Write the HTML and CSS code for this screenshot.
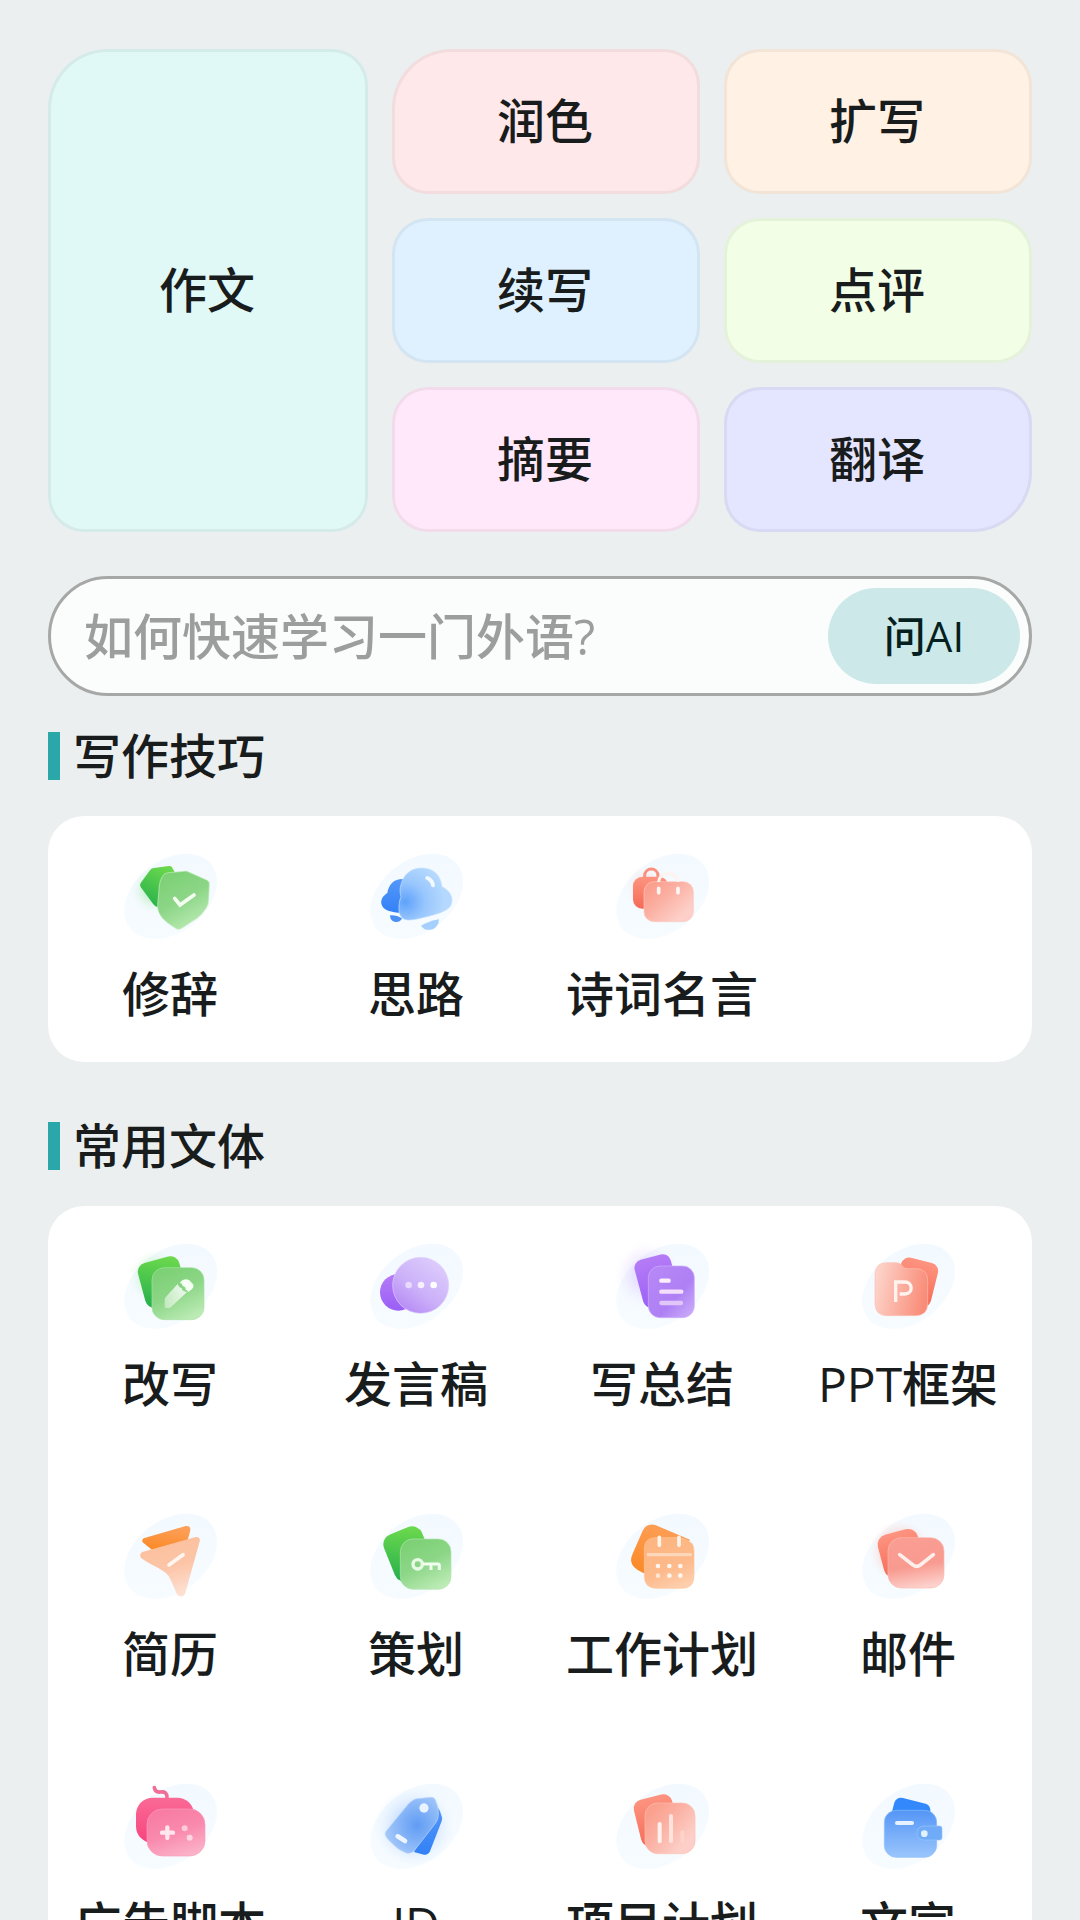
FILE: index.html
```html
<!DOCTYPE html>
<html lang="zh-CN">
<head>
<meta charset="utf-8">
<meta name="viewport" content="width=device-width, initial-scale=1">
<title>AI 写作</title>
<link rel="stylesheet" href="styles.css">
</head>
<body>
<svg class="defs" aria-hidden="true">
  <defs>
    <linearGradient id="blob" x1="0" y1="1" x2="1" y2="0"><stop offset="0" stop-color="#f7fcff"/><stop offset="1" stop-color="#f2f9ff"/></linearGradient>
    <linearGradient id="green" x1="0.7" y1="0" x2="0.3" y2="1"><stop offset="0" stop-color="#6bd84d"/><stop offset="1" stop-color="#28b14c"/></linearGradient>
    <linearGradient id="green-glass" x1="0.2" y1="0" x2="0.7" y2="1"><stop offset="0" stop-color="#7bd073"/><stop offset="0.5" stop-color="#8cd687"/><stop offset="1" stop-color="#bcebb5"/></linearGradient>
    <linearGradient id="purple" x1="0.5" y1="0" x2="0.5" y2="1"><stop offset="0" stop-color="#b57cf6"/><stop offset="1" stop-color="#9a5ff6"/></linearGradient>
    <linearGradient id="purple-glass" x1="0.2" y1="0.9" x2="0.8" y2="0.1"><stop offset="0" stop-color="#b88ef5"/><stop offset="0.4" stop-color="#cbb0f9"/><stop offset="1" stop-color="#dccbfc"/></linearGradient>
    <linearGradient id="purple-page" x1="0" y1="0" x2="1" y2="1"><stop offset="0" stop-color="#b888f7"/><stop offset="0.6" stop-color="#ae80f4"/><stop offset="1" stop-color="#ceb2fa"/></linearGradient>
    <linearGradient id="red" x1="0.5" y1="0" x2="0.5" y2="1"><stop offset="0" stop-color="#fd9480"/><stop offset="1" stop-color="#f56a55"/></linearGradient>
    <linearGradient id="red-glass" x1="0.1" y1="0.2" x2="0.8" y2="0.8"><stop offset="0" stop-color="#fba08f"/><stop offset="0.4" stop-color="#fbb0a2"/><stop offset="1" stop-color="#fdcfc8"/></linearGradient>
    <linearGradient id="red-left" x1="0" y1="0.3" x2="1" y2="0.5"><stop offset="0" stop-color="#fdd5cc"/><stop offset="0.5" stop-color="#fbb0a1"/><stop offset="1" stop-color="#f98b77"/></linearGradient>
    <linearGradient id="red-down" x1="0.4" y1="0" x2="0.6" y2="1"><stop offset="0" stop-color="#fa9d92"/><stop offset="0.55" stop-color="#f89a90"/><stop offset="1" stop-color="#fdd3ce"/></linearGradient>
    <linearGradient id="orange" x1="0.7" y1="0" x2="0.3" y2="1"><stop offset="0" stop-color="#fda05a"/><stop offset="1" stop-color="#fb8a28"/></linearGradient>
    <linearGradient id="orange-glass" x1="0.3" y1="0" x2="0.7" y2="1"><stop offset="0" stop-color="#fdb580"/><stop offset="0.6" stop-color="#fdba8b"/><stop offset="1" stop-color="#fecfae"/></linearGradient>
    <linearGradient id="peach-glass" x1="0.4" y1="0" x2="0.7" y2="1"><stop offset="0" stop-color="#fcc09c"/><stop offset="0.5" stop-color="#fcc5a8"/><stop offset="1" stop-color="#fee3d7"/></linearGradient>
    <linearGradient id="blue" x1="0.5" y1="0" x2="0.5" y2="1"><stop offset="0" stop-color="#5497f8"/><stop offset="1" stop-color="#3381f7"/></linearGradient>
    <radialGradient id="cloud" cx="0.12" cy="0.65" r="0.75"><stop offset="0" stop-color="#5fa2fb"/><stop offset="0.5" stop-color="#98c6fd"/><stop offset="1" stop-color="#b5d9fe"/></radialGradient>
    <radialGradient id="tag" cx="0.6" cy="0.5" r="0.65"><stop offset="0" stop-color="#609cf4"/><stop offset="1" stop-color="#a9cbfa"/></radialGradient>
    <linearGradient id="wallet" x1="0.5" y1="0" x2="0.5" y2="1"><stop offset="0" stop-color="#5496f6"/><stop offset="1" stop-color="#9bc5fc"/></linearGradient>
    <linearGradient id="pink" x1="0.5" y1="0" x2="0.5" y2="1"><stop offset="0" stop-color="#fa6a96"/><stop offset="1" stop-color="#f7447e"/></linearGradient>
    <linearGradient id="pink-glass" x1="0.3" y1="0" x2="0.7" y2="1"><stop offset="0" stop-color="#f87ba3"/><stop offset="0.5" stop-color="#f98aae"/><stop offset="1" stop-color="#fbb3ca"/></linearGradient>
    <linearGradient id="shine" x1="0" y1="1" x2="1" y2="0"><stop offset="0" stop-color="#fff" stop-opacity="0.4"/><stop offset="1" stop-color="#fff" stop-opacity="0.9"/></linearGradient>
    <radialGradient id="glow-blue"><stop offset="0.4" stop-color="#a9ccff" stop-opacity="0.6"/><stop offset="1" stop-color="#dcebff" stop-opacity="0"/></radialGradient>
    <radialGradient id="glow-red"><stop offset="0.5" stop-color="#ff9b8e" stop-opacity="0.4"/><stop offset="1" stop-color="#ffd8d2" stop-opacity="0"/></radialGradient>
    <radialGradient id="glow-purple"><stop offset="0.4" stop-color="#c9a8ff" stop-opacity="0.3"/><stop offset="1" stop-color="#eadcff" stop-opacity="0"/></radialGradient>
    <radialGradient id="glow-green"><stop offset="0.4" stop-color="#9be6a0" stop-opacity="0.45"/><stop offset="1" stop-color="#dcf7df" stop-opacity="0"/></radialGradient>
    <symbol id="base" viewBox="0 0 288 288"><ellipse cx="146" cy="142" rx="155" ry="108" transform="rotate(-38 146 142)" fill="url(#blob)"/></symbol>
  </defs>
</svg>

<main class="page">
  <nav class="tools" aria-label="写作工具">
    <button class="tool tool-essay">作文</button>
    <button class="tool tool-polish">润色</button>
    <button class="tool tool-expand">扩写</button>
    <button class="tool tool-continue">续写</button>
    <button class="tool tool-review">点评</button>
    <button class="tool tool-digest">摘要</button>
    <button class="tool tool-translate">翻译</button>
  </nav>

  <form class="ask">
    <input class="ask-input" type="text" aria-label="向AI提问" placeholder="如何快速学习一门外语?">
    <button class="ask-button" type="button">问AI</button>
  </form>

  <section class="group">
    <h2 class="group-title">写作技巧</h2>
    <div class="card">
      <a class="item" href="#rhetoric">
        <svg class="icon" viewBox="69 57 288 288" aria-hidden="true">
          <use href="#base" x="69" y="57" width="288" height="288"/>
          <circle cx="165" cy="180" r="70" fill="url(#glow-green)"/>
          <path d="M154 119q4-4 11-5l44-6q7-1 10 4l8 14v100l-50 6q-8-2-14-9l-38-52q-4-6 0-12z" fill="url(#green)"/>
          <path d="M195 133q6-4 14-5l45-4q8-2 15 2l54 24q9 4 8 14l-2 46q0 14-8 25-9 14-21 25-9 8-20 14l-32 21q-8 5-16 1l-26-17q-21-16-27-33-4-10-3-22l4-46q1-30 15-45z" fill="url(#green-glass)" stroke="#c5efc0" stroke-width="2"/>
          <path d="M227 205l16 20 42-30" fill="none" stroke="#f4fff2" stroke-width="11" stroke-linecap="round"/>
        </svg>
        <span class="item-label">修辞</span>
      </a>
      <a class="item" href="#ideas">
        <svg class="icon" viewBox="807 57 288 288" aria-hidden="true">
          <use href="#base" x="807" y="57" width="288" height="288"/>
          <path d="M915 147c-28-2-46 14-50 42-12 8-20 18-18 32 4 20 30 26 62 28z" fill="url(#blue)"/>
          <path d="M873 256q18-3 36 9-6 13-20 11-16-3-16-20z" fill="#4b90f7"/>
          <path d="M966 287q24-14 54-19-1 22-19 30-24 6-35-11z" fill="#a5cffc"/>
          <path d="M907 160c8-30 34-48 64-46 34 2 54 22 58 56 22 12 34 28 29 50-6 22-36 30-66 38-26 6-50 14-68 12-20-3-26-20-24-42 1-12 2-18 6-28-4-12-4-26 1-40z" fill="url(#cloud)" stroke="#c6e1ff" stroke-width="2"/>
          <path d="M985 144q15 7 17 22" fill="none" stroke="#f3f9ff" stroke-width="12" stroke-linecap="round"/>
        </svg>
        <span class="item-label">思路</span>
      </a>
      <a class="item" href="#quotes">
        <svg class="icon" viewBox="225 57 288 288" aria-hidden="true">
          <use href="#base" x="225" y="57" width="288" height="288"/>
          <circle cx="320" cy="170" r="62" fill="url(#glow-red)" opacity="0.35"/>
          <path d="M317 146v-8c0-28 40-28 40 0v8" fill="none" stroke="#fa8f7d" stroke-width="9"/>
          <rect x="282" y="140" width="106" height="96" rx="28" fill="url(#red)"/>
          <rect x="315" y="155" width="148" height="120" rx="30" fill="url(#red-glass)" stroke="#fdc8bf" stroke-width="2"/>
          <path d="M359 156c2-34 56-34 58 0" fill="none" stroke="#fff3f0" stroke-width="9"/>
          <path d="M359 175v13M417 175v13" stroke="#fff6f4" stroke-width="11" stroke-linecap="round"/>
        </svg>
        <span class="item-label">诗词名言</span>
      </a>
    </div>
  </section>

  <section class="group">
    <h2 class="group-title">常用文体</h2>
    <div class="card">
      <a class="item" href="#rewrite">
        <svg class="icon" viewBox="69 57 288 288" aria-hidden="true">
          <use href="#base" x="69" y="57" width="288" height="288"/>
          <circle cx="170" cy="170" r="82" fill="url(#glow-green)"/>
          <rect x="126" y="117" width="128" height="138" rx="27" transform="rotate(-15 190 186)" fill="url(#green)"/>
          <rect x="159" y="143" width="156" height="156" rx="37" fill="url(#green-glass)" stroke="#a9e3a3" stroke-width="2"/>
          <path d="M236 192q4 12 12 12 0 10 16 12l-47 44q-4 4-9 4h-7q-4 0-4-5v-20q0-5 4-9z" fill="url(#shine)"/>
          <path d="M247 183q12-10 24-2l10 10q6 8-2 16l-11 9q-4-7-8-7 1-9-9-11 0-7-8-10z" fill="#f6fff4"/>
        </svg>
        <span class="item-label">改写</span>
      </a>
      <a class="item" href="#speech">
        <svg class="icon" viewBox="807 57 288 288" aria-hidden="true">
          <use href="#base" x="807" y="57" width="288" height="288"/>
          <circle cx="898" cy="217" r="55" fill="url(#purple)"/>
          <circle cx="965" cy="196" r="84" fill="url(#purple-glass)" stroke="#e0d0fd" stroke-width="2"/>
          <circle cx="929" cy="195" r="10" fill="#e8dafd"/>
          <circle cx="966" cy="195" r="10" fill="#f5effe"/>
          <circle cx="1004" cy="195" r="10" fill="#fff"/>
        </svg>
        <span class="item-label">发言稿</span>
      </a>
      <a class="item" href="#summary">
        <svg class="icon" viewBox="225 57 288 288" aria-hidden="true">
          <use href="#base" x="225" y="57" width="288" height="288"/>
          <circle cx="325" cy="165" r="100" fill="url(#glow-purple)"/>
          <rect x="298" y="109" width="112" height="148" rx="25" transform="rotate(-15 354 183)" fill="url(#purple)"/>
          <rect x="328" y="138" width="138" height="155" rx="35" fill="url(#purple-page)" stroke="#cdb0fa" stroke-width="2"/>
          <path d="M367 182h22" stroke="#fdeffb" stroke-width="13" stroke-linecap="round"/>
          <path d="M367 215h60" stroke="#f3defb" stroke-width="13" stroke-linecap="round"/>
          <path d="M367 249h59" stroke="#e1c6fa" stroke-width="13" stroke-linecap="round"/>
        </svg>
        <span class="item-label">写总结</span>
      </a>
      <a class="item" href="#ppt">
        <svg class="icon" viewBox="963 57 288 288" aria-hidden="true">
          <use href="#base" x="963" y="57" width="288" height="288"/>
          <rect x="1074" y="119" width="114" height="136" rx="25" transform="rotate(14 1131 187)" fill="url(#red)"/>
          <path d="M1044 128h28q12 0 18 10 5 8 18 8h22q36 0 36 36v68q0 37-37 37h-84q-37 0-37-37v-86q0-36 36-36z" fill="url(#red-left)" stroke="#fdc0b4" stroke-width="2"/>
          <path d="M1070 246v-60h27c26 0 26 36 0 36h-15" fill="none" stroke="#fff3f0" stroke-width="10"/>
        </svg>
        <span class="item-label">PPT框架</span>
      </a>
      <a class="item" href="#resume">
        <svg class="icon" viewBox="69 57 288 288" aria-hidden="true">
          <use href="#base" x="69" y="57" width="288" height="288"/>
          <path d="M134 145l126-37q13-2 14 9 0 4-1 8l-12 42-95 13q-6 1-11-4l-24-19q-4-7 3-12z" fill="url(#orange)"/>
          <path d="M130 186l160-45q12-1 13 10l-44 158q-6 15-20 8-4-2-6-6-8-20-18-41-6-15-15-22-20-14-44-25-14-8-30-19-7-10 4-18z" fill="url(#peach-glass)"/>
          <path d="M210 225l42-31" stroke="#fff6f0" stroke-width="11" stroke-linecap="round"/>
        </svg>
        <span class="item-label">简历</span>
      </a>
      <a class="item" href="#planning">
        <svg class="icon" viewBox="807 57 288 288" aria-hidden="true">
          <use href="#base" x="807" y="57" width="288" height="288"/>
          <rect x="867" y="117" width="123" height="150" rx="32" transform="rotate(-22 928 192)" fill="url(#green)"/>
          <rect x="904" y="147" width="152" height="151" rx="38" fill="url(#green-glass)" stroke="#b3e6b4" stroke-width="2"/>
          <circle cx="956" cy="223" r="14" fill="none" stroke="#e8fae6" stroke-width="10"/>
          <path d="M972 222h45q4 0 4 4v14M996 224v16" fill="none" stroke="#f1fdef" stroke-width="9"/>
        </svg>
        <span class="item-label">策划</span>
      </a>
      <a class="item" href="#workplan">
        <svg class="icon" viewBox="225 57 288 288" aria-hidden="true">
          <use href="#base" x="225" y="57" width="288" height="288"/>
          <path d="M311 122q12-24 38-17l104 44-80 104-60-4q-36-14-37-38 0-10 6-22z" fill="url(#orange)"/>
          <path d="M350 143h50q34-4 60 18 5 10 5 22v75q0 37-37 37h-75q-37 0-37-37v-80q0-35 34-35z" fill="url(#orange-glass)" stroke="#fec79e" stroke-width="2"/>
          <path d="M324 194h134" stroke="#fed6ba" stroke-width="10"/>
          <path d="M361 142v24M420 142v24" stroke="#fff2e8" stroke-width="11" stroke-linecap="round"/>
          <g fill="#fff7ef"><circle cx="357" cy="228" r="7"/><circle cx="391" cy="228" r="7"/><circle cx="424" cy="228" r="7"/><circle cx="357" cy="257" r="7" opacity="0.7"/><circle cx="391" cy="257" r="7"/><circle cx="424" cy="257" r="7"/></g>
        </svg>
        <span class="item-label">工作计划</span>
      </a>
      <a class="item" href="#mail">
        <svg class="icon" viewBox="963 57 288 288" aria-hidden="true">
          <use href="#base" x="963" y="57" width="288" height="288"/>
          <circle cx="1084" cy="184" r="94" fill="url(#glow-red)"/>
          <rect x="1024" y="124" width="124" height="132" rx="30" transform="rotate(-15 1086 190)" fill="url(#red)"/>
          <rect x="1047" y="143" width="168" height="151" rx="40" fill="url(#red-down)" stroke="#fcbbb2" stroke-width="2"/>
          <path d="M1082 194l40 31q11 8 22 0l39-31" fill="none" stroke="#ffeee9" stroke-width="11" stroke-linecap="round"/>
        </svg>
        <span class="item-label">邮件</span>
      </a>
      <a class="item" href="#adscript">
        <svg class="icon" viewBox="249 57 288 288" aria-hidden="true">
          <use href="#base" x="249" y="57" width="288" height="288"/>
          <path d="M346 83c2 10 8 14 18 13 14-2 20 4 20 16" fill="none" stroke="#f06d96" stroke-width="11" stroke-linecap="round"/>
          <rect x="291" y="113" width="174" height="136" rx="50" fill="url(#pink)"/>
          <rect x="324" y="147" width="174" height="141" rx="46" fill="url(#pink-glass)" stroke="#fa9dbc" stroke-width="2"/>
          <path d="M369 218h33M385 202v32" stroke="#ffe5ee" stroke-width="13" stroke-linecap="round"/>
          <circle cx="437" cy="205" r="9" fill="#fdcadb"/>
          <circle cx="452" cy="233" r="9" fill="#fdd6e3"/>
        </svg>
        <span class="item-label">广告脚本</span>
      </a>
      <a class="item" href="#jd">
        <svg class="icon" viewBox="987 57 288 288" aria-hidden="true">
          <use href="#base" x="987" y="57" width="288" height="288"/>
          <circle cx="1125" cy="200" r="120" fill="url(#glow-blue)"/>
          <path d="M1190 140q8 0 13 14l6 18q1 8-2 14l-34 88q-6 12-18 10l-30-8z" fill="url(#blue)"/>
          <path d="M1119 123q6-6 14-7l44-4q8 0 12 7l7 20q3 12 2 28-1 12-8 22l-62 80q-10 13-26 10-24-8-48-34-20-18-14-30l68-83q5-6 11-9z" fill="url(#tag)" stroke="#b9d6fc" stroke-width="2"/>
          <circle cx="1155" cy="144" r="14" fill="#e9f3ff"/>
          <path d="M1076 229l22 14" stroke="#edf5ff" stroke-width="14" stroke-linecap="round"/>
        </svg>
        <span class="item-label">JD</span>
      </a>
      <a class="item" href="#projectplan">
        <svg class="icon" viewBox="225 57 288 288" aria-hidden="true">
          <use href="#base" x="225" y="57" width="288" height="288"/>
          <rect x="294" y="109" width="118" height="144" rx="27" transform="rotate(-14 353 181)" fill="url(#red)"/>
          <rect x="318" y="129" width="150" height="152" rx="38" fill="url(#red-glass)" stroke="#fdc0b3" stroke-width="2"/>
          <path d="M362 192v52" stroke="#fff2ee" stroke-width="12" stroke-linecap="round"/>
          <path d="M396 168v75" stroke="#ffe3dc" stroke-width="12" stroke-linecap="round"/>
          <path d="M430 217v26" stroke="#fed3ca" stroke-width="12" stroke-linecap="round"/>
        </svg>
        <span class="item-label">项目计划</span>
      </a>
      <a class="item" href="#publicity">
        <svg class="icon" viewBox="963 57 288 288" aria-hidden="true">
          <use href="#base" x="963" y="57" width="288" height="288"/>
          <path d="M1066 128q7-18 26-14l68 17q14 5 14 20v20h-114v-20z" fill="#3389fb"/>
          <rect x="1036" y="151" width="157" height="141" rx="36" fill="url(#wallet)" stroke="#8dbcf9" stroke-width="2"/>
          <path d="M1155 198h47q7 0 7 7v28q0 7-7 7h-47q-21-2-21-21t21-21z" fill="#6fabf7" stroke="#9cc6fb" stroke-width="2"/>
          <path d="M1074 189h45" stroke="#e6f2ff" stroke-width="12" stroke-linecap="round"/>
          <circle cx="1156" cy="221" r="10" fill="#e1f2ff"/>
        </svg>
        <span class="item-label">文宣</span>
      </a>
    </div>
  </section>
</main>
</body>
</html>
```

FILE: styles.css
```css
* {
  box-sizing: border-box;
}

body {
  margin: 0;
  background: #ebefef;
  color: #191c1c;
  font-family: "Open Sans", "Noto Sans CJK SC", sans-serif;
  font-size: 48px;
  font-weight: 500;
  line-height: 66px;
}

button,
input {
  font: inherit;
  color: inherit;
}

.defs {
  position: absolute;
  width: 0;
  height: 0;
}

.page {
  padding: 49px 48px;
}

.tools {
  display: grid;
  grid-template-columns: 320fr 308fr 308fr;
  grid-auto-rows: 145px;
  gap: 24px;
}

.tool {
  padding: 0 2px 2px 0;
  border: 3px solid rgba(0, 0, 0, 0.05);
  border-radius: 36px;
  cursor: pointer;
}

.tool-essay {
  grid-row: span 3;
  border-top-left-radius: 60px;
  background-color: #e0f8f6;
}

.tool-polish {
  border-top-left-radius: 60px;
  background-color: #ffe8ea;
}

.tool-expand {
  background-color: #fff1e3;
}

.tool-continue {
  background-color: #dff1ff;
}

.tool-review {
  background-color: #f2ffe6;
}

.tool-digest {
  background-color: #ffe8f9;
}

.tool-translate {
  border-bottom-right-radius: 60px;
  background-color: #e4e5ff;
}

.ask {
  display: flex;
  align-items: center;
  margin-top: 44px;
  padding: 9px;
  border: 3px solid #a6a8a7;
  border-radius: 60px;
  background: #fbfdfc;
}

.ask-input {
  flex: 1;
  min-width: 0;
  height: 96px;
  padding: 0 24px;
  border: 0;
  outline: 0;
  background: none;
  font-size: 49px;
}

.ask-input::placeholder {
  color: #9c9e9d;
  opacity: 1;
}

.ask-button {
  width: 192px;
  height: 96px;
  padding: 0;
  border: 0;
  border-radius: 48px;
  background: #cce8e8;
  color: #051f20;
  font-size: 42px;
  cursor: pointer;
}

.group {
  margin-top: 36px;
}

.group + .group {
  margin-top: 60px;
}

.group-title {
  margin: 0 0 36px;
  padding-left: 13px;
  border-left: 12px solid #29a7a9;
  font-size: 48px;
  font-weight: 500;
  line-height: 48px;
}

.card {
  display: grid;
  grid-template-columns: repeat(4, 1fr);
  row-gap: 24px;
  border-radius: 36px;
  background: #fff;
}

.item {
  display: flex;
  flex-direction: column;
  align-items: center;
  gap: 16px;
  padding: 33px 2px 35px 0;
  color: inherit;
  text-decoration: none;
  white-space: nowrap;
}

.icon {
  width: 96px;
  height: 96px;
}
```
